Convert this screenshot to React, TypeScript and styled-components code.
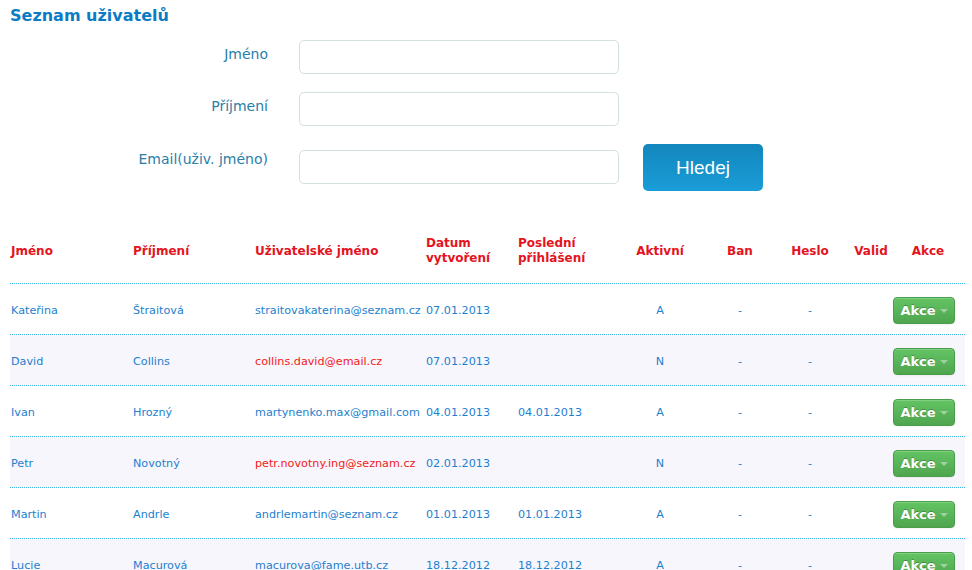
import React from "react";
import styled, { createGlobalStyle } from "styled-components";

const Global = createGlobalStyle`
  html, body { margin: 0; padding: 0; background: #ffffff; }
  body { font-family: "DejaVu Sans", Verdana, sans-serif; }
  * { box-sizing: border-box; }
`;

const Page = styled.div`
  padding: 6px 7px 0 10px;
  width: 972px;
  height: 570px;
  overflow: hidden;
`;

const Title = styled.h1`
  margin: 0;
  font-size: 16px;
  font-weight: bold;
  color: #0b7bc6;
  line-height: 20px;
`;

const Form = styled.div`
  display: flex;
  flex-direction: column;
  gap: 18px;
  margin-top: 14px;
`;

const FormRow = styled.div`
  display: flex;
  align-items: flex-start;
`;

const Label = styled.label<{ $offset: number }>`
  width: 258px;
  text-align: right;
  font-size: 14px;
  line-height: 17px;
  color: #2a7ea8;
  padding-top: ${(p) => p.$offset}px;
`;

const Input = styled.input<{ $top?: number }>`
  margin-left: 31px;
  margin-top: ${(p) => p.$top ?? 0}px;
  width: 320px;
  height: 34px;
  border: 1px solid #d3e0de;
  border-radius: 5px;
  background: #fff;
  outline: none;
`;

const SearchButton = styled.button`
  margin-left: 24px;
  width: 120px;
  height: 47px;
  border: none;
  border-radius: 5px;
  background: linear-gradient(#1386bd, #1a9dd7);
  color: #fff;
  font-family: "Liberation Sans", Arial, sans-serif;
  font-size: 19px;
  cursor: pointer;
`;

const COLS = "122px 122px 171px 92px 103px 80px 80px 60px 62px 63px";

const Table = styled.div`
  margin-top: 28px;
  width: 955px;
`;

const HeadRow = styled.div`
  display: grid;
  grid-template-columns: ${COLS};
  height: 65px;
  align-items: center;
  border-bottom: 1px dotted #3fb3e0;
`;

const HeadCell = styled.div<{ $center?: boolean; $pr?: number }>`
  font-size: 12px;
  font-weight: bold;
  color: #e3141d;
  line-height: 15px;
  padding-left: ${(p) => (p.$center ? 0 : 1)}px;
  padding-right: ${(p) => p.$pr ?? 0}px;
  text-align: ${(p) => (p.$center ? "center" : "left")};
`;

const Row = styled.div<{ $alt: boolean }>`
  display: grid;
  grid-template-columns: ${COLS};
  height: 51px;
  align-items: center;
  border-bottom: 1px dotted #3fb3e0;
  background: ${(p) => (p.$alt ? "#f8f6fd" : "#ffffff")};
`;

const Cell = styled.div<{ $center?: boolean; $red?: boolean }>`
  font-size: 11.2px;
  color: ${(p) => (p.$red ? "#f01a1a" : "#1d7fcf")};
  padding-left: ${(p) => (p.$center ? 0 : 1)}px;
  padding-top: 2px;
  text-align: ${(p) => (p.$center ? "center" : "left")};
  white-space: nowrap;
`;

const ActionCell = styled.div`
  display: flex;
  justify-content: flex-end;
  padding-right: 10px;
  padding-top: 2px;
`;

const ActionButton = styled.button`
  flex-shrink: 0;
  display: inline-flex;
  align-items: center;
  justify-content: center;
  gap: 4px;
  width: 62px;
  height: 27px;
  padding: 0;
  border: 1px solid #4a9d4a;
  border-radius: 4px;
  background: linear-gradient(#63c463, #4fa54f);
  color: #fff;
  font-family: "DejaVu Sans", Verdana, sans-serif;
  font-size: 13px;
  font-weight: bold;
  text-shadow: 0 -1px 0 rgba(0, 0, 0, 0.25);
  box-shadow: inset 0 1px 0 rgba(255, 255, 255, 0.2), 0 1px 2px rgba(0, 0, 0, 0.05);
  cursor: pointer;
`;

const Caret = styled.span`
  width: 0;
  height: 0;
  border-left: 4px solid transparent;
  border-right: 4px solid transparent;
  border-top: 4px solid #9fd09f;
  margin-top: 1px;
`;

type User = {
  first: string;
  last: string;
  email: string;
  emailRed?: boolean;
  created: string;
  login: string;
  active: string;
};

const users: User[] = [
  { first: "Kateřina", last: "Štraitová", email: "straitovakaterina@seznam.cz", created: "07.01.2013", login: "", active: "A" },
  { first: "David", last: "Collins", email: "collins.david@email.cz", emailRed: true, created: "07.01.2013", login: "", active: "N" },
  { first: "Ivan", last: "Hrozný", email: "martynenko.max@gmail.com", created: "04.01.2013", login: "04.01.2013", active: "A" },
  { first: "Petr", last: "Novotný", email: "petr.novotny.ing@seznam.cz", emailRed: true, created: "02.01.2013", login: "", active: "N" },
  { first: "Martin", last: "Andrle", email: "andrlemartin@seznam.cz", created: "01.01.2013", login: "01.01.2013", active: "A" },
  { first: "Lucie", last: "Macurová", email: "macurova@fame.utb.cz", created: "18.12.2012", login: "18.12.2012", active: "A" },
];

export default function App() {
  return (
    <Page>
      <Global />
      <Title>Seznam uživatelů</Title>
      <Form>
        <FormRow>
          <Label $offset={6}>Jméno</Label>
          <Input />
        </FormRow>
        <FormRow>
          <Label $offset={6}>Příjmení</Label>
          <Input />
        </FormRow>
        <FormRow>
          <Label $offset={7}>Email(uživ. jméno)</Label>
          <Input $top={6} />
          <SearchButton>Hledej</SearchButton>
        </FormRow>
      </Form>
      <Table>
        <HeadRow>
          <HeadCell>Jméno</HeadCell>
          <HeadCell>Příjmení</HeadCell>
          <HeadCell>Uživatelské jméno</HeadCell>
          <HeadCell>Datum<br />vytvoření</HeadCell>
          <HeadCell>Poslední<br />přihlášení</HeadCell>
          <HeadCell $center>Aktivní</HeadCell>
          <HeadCell $center>Ban</HeadCell>
          <HeadCell $center>Heslo</HeadCell>
          <HeadCell $center>Valid</HeadCell>
          <HeadCell $center $pr={11}>Akce</HeadCell>
        </HeadRow>
        {users.map((u, i) => (
          <Row key={u.email} $alt={i % 2 === 1}>
            <Cell>{u.first}</Cell>
            <Cell>{u.last}</Cell>
            <Cell $red={u.emailRed}>{u.email}</Cell>
            <Cell>{u.created}</Cell>
            <Cell>{u.login}</Cell>
            <Cell $center>{u.active}</Cell>
            <Cell $center>-</Cell>
            <Cell $center>-</Cell>
            <Cell $center></Cell>
            <ActionCell>
              <ActionButton>
                Akce <Caret />
              </ActionButton>
            </ActionCell>
          </Row>
        ))}
      </Table>
    </Page>
  );
}
